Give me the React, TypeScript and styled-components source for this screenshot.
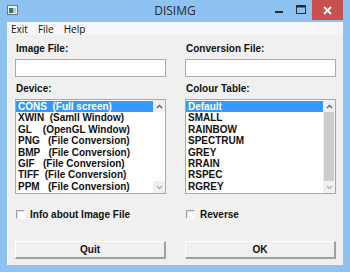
import React from 'react'
import styled, { createGlobalStyle } from 'styled-components'

const devices = [
  'CONS  (Full screen)',
  'XWIN  (Samll Window)',
  'GL    (OpenGL Window)',
  'PNG   (File Conversion)',
  'BMP   (File Conversion)',
  'GIF   (File Conversion)',
  'TIFF  (File Conversion)',
  'PPM   (File Conversion)',
]

const colourTables = ['Default', 'SMALL', 'RAINBOW', 'SPECTRUM', 'GREY', 'RRAIN', 'RSPEC', 'RGREY']

const GlobalStyle = createGlobalStyle`
  html, body {
    margin: 0;
    padding: 0;
    background: #8ec3f1;
  }
  body {
    font-family: 'Liberation Sans', Arial, sans-serif;
  }
`

const Window = styled.div`
  width: 350px;
  height: 272px;
  background: #8ec3f1;
  display: flex;
  flex-direction: column;
  box-sizing: border-box;
  padding: 0 7px 7px 7px;
`

const TitleBar = styled.div`
  height: 22px;
  position: relative;
  display: flex;
  align-items: center;
  justify-content: center;
`

const Title = styled.div`
  font-family: 'Open Sans', 'Liberation Sans', sans-serif;
  font-size: 12px;
  color: #2b2b2b;
  margin-top: -1px;
`

const AppIcon = styled.svg`
  position: absolute;
  left: 0;
  top: 5px;
`

const Controls = styled.div`
  position: absolute;
  right: 0;
  top: 0;
  display: flex;
  align-items: flex-start;
`

const CtrlButton = styled.div<{ $close?: boolean }>`
  width: ${(p) => (p.$close ? '31px' : '22px')};
  height: 20px;
  background: ${(p) => (p.$close ? '#c75050' : 'transparent')};
  display: flex;
  align-items: center;
  justify-content: center;
`

const MenuBar = styled.div`
  height: 13px;
  background: #f5f6f7;
  display: flex;
  align-items: center;
  gap: 10px;
  padding: 0 0 0 4px;
  font-family: 'Open Sans', 'Liberation Sans', sans-serif;
  font-size: 10px;
  color: #111;
`

const Content = styled.div`
  flex: 1;
  background: #f0f0f0;
  border-left: 1px solid #fafafa;
  display: grid;
  grid-template-columns: 151px 151px;
  column-gap: 19px;
  padding: 7px 0 0 7px;
`

const Column = styled.div`
  display: flex;
  flex-direction: column;
`

const Label = styled.div<{ $gap?: number }>`
  font-size: 10px;
  font-weight: bold;
  color: #111;
  height: 13px;
  line-height: 13px;
  padding-left: 1px;
  margin-top: ${(p) => p.$gap ?? 0}px;
`

const TextInput = styled.div`
  height: 16px;
  margin-top: 4px;
  background: #fff;
  border: 1px solid #a9a9a9;
`

const ListBox = styled.div`
  margin-top: 4px;
  height: 93px;
  background: #fff;
  border: 1px solid #a9a9a9;
  display: flex;
`

const Items = styled.div`
  flex: 1;
  padding-top: 1px;
`

const Item = styled.div<{ $selected?: boolean }>`
  height: 11.4px;
  line-height: 11.4px;
  font-size: 10px;
  font-weight: bold;
  white-space: pre;
  padding-left: 2px;
  color: ${(p) => (p.$selected ? '#fff' : '#111')};
  background: ${(p) => (p.$selected ? '#3399ff' : 'transparent')};
`

const ScrollBar = styled.div<{ $active?: boolean }>`
  width: 12px;
  display: flex;
  flex-direction: column;
  background: ${(p) => (p.$active ? '#f0f0f0' : '#fff')};
`

const Arrow = styled.div`
  height: 12px;
  display: flex;
  align-items: center;
  justify-content: center;
  background: #f0f0f0;
`

const Thumb = styled.div<{ $active?: boolean }>`
  flex: 1;
  background: ${(p) => (p.$active ? '#cdcdcd' : '#fff')};
  margin: 0 1px;
`

const CheckRow = styled.div`
  margin-top: 14px;
  height: 12px;
  display: flex;
  align-items: center;
  gap: 5px;
  padding-left: 1px;
  font-size: 10px;
  font-weight: bold;
  color: #111;
`

const CheckBox = styled.div`
  width: 9px;
  height: 9px;
  box-sizing: border-box;
  border-top: 1px solid #a0a0a0;
  border-left: 1px solid #a0a0a0;
  border-right: 1px solid #fff;
  border-bottom: 1px solid #fff;
  background: #fff;
  box-shadow: inset 1px 1px 0 #e3e3e3;
`

const Button = styled.div`
  margin-top: 21px;
  height: 18px;
  box-sizing: border-box;
  background: #f0f0f0;
  border-top: 1px solid #fff;
  border-left: 1px solid #fff;
  border-right: 2px solid #a0a0a0;
  border-bottom: 2px solid #a0a0a0;
  display: flex;
  align-items: center;
  justify-content: center;
  font-size: 10px;
  font-weight: bold;
  color: #111;
`

const Chevron: React.FC<{ up?: boolean }> = ({ up }) => (
  <svg width="7" height="5" viewBox="0 0 7 5">
    <path
      d={up ? 'M1 4 L3.5 1.5 L6 4' : 'M1 1 L3.5 3.5 L6 1'}
      fill="none"
      stroke={up ? '#606060' : '#b0b0b0'}
      strokeWidth="1.3"
    />
  </svg>
)

const List: React.FC<{ items: string[]; active?: boolean }> = ({ items, active }) => (
  <ListBox>
    <Items>
      {items.map((it, i) => (
        <Item key={it} $selected={i === 0}>
          {it}
        </Item>
      ))}
    </Items>
    <ScrollBar $active={active}>
      <Arrow>
        <Chevron up />
      </Arrow>
      <Thumb $active={active} />
      <Arrow>
        <Chevron />
      </Arrow>
    </ScrollBar>
  </ListBox>
)

export default function App() {
  return (
    <>
      <GlobalStyle />
      <Window>
        <TitleBar>
          <AppIcon width="11" height="10" viewBox="0 0 11 10">
            <rect x="0.5" y="0.5" width="10" height="9" fill="#e8eef2" stroke="#6a7a86" />
            <rect x="2" y="3" width="4" height="5" fill="#2e7d5b" />
            <rect x="6" y="3" width="3" height="5" fill="#b9c8d3" />
          </AppIcon>
          <Title>DISIMG</Title>
          <Controls>
            <CtrlButton>
              <svg width="10" height="10" viewBox="0 0 10 10">
                <rect x="1" y="6" width="8" height="2" fill="#2b2b2b" />
              </svg>
            </CtrlButton>
            <CtrlButton>
              <svg width="10" height="10" viewBox="0 0 10 10">
                <rect x="0.5" y="0.5" width="9" height="8" fill="none" stroke="#2b2b2b" />
                <rect x="0.5" y="0.5" width="9" height="2" fill="#2b2b2b" />
              </svg>
            </CtrlButton>
            <CtrlButton $close>
              <svg width="9" height="9" viewBox="0 0 9 9">
                <path d="M1 1 L8 8 M8 1 L1 8" stroke="#fff" strokeWidth="1.8" />
              </svg>
            </CtrlButton>
          </Controls>
        </TitleBar>
        <MenuBar>
          <span>Exit</span>
          <span>File</span>
          <span>Help</span>
        </MenuBar>
        <Content>
          <Column>
            <Label>Image File:</Label>
            <TextInput />
            <Label $gap={5}>Device:</Label>
            <List items={devices} />
            <CheckRow>
              <CheckBox />
              Info about Image File
            </CheckRow>
            <Button>Quit</Button>
          </Column>
          <Column>
            <Label>Conversion File:</Label>
            <TextInput />
            <Label $gap={5}>Colour Table:</Label>
            <List items={colourTables} active />
            <CheckRow>
              <CheckBox />
              Reverse
            </CheckRow>
            <Button>OK</Button>
          </Column>
        </Content>
      </Window>
    </>
  )
}
